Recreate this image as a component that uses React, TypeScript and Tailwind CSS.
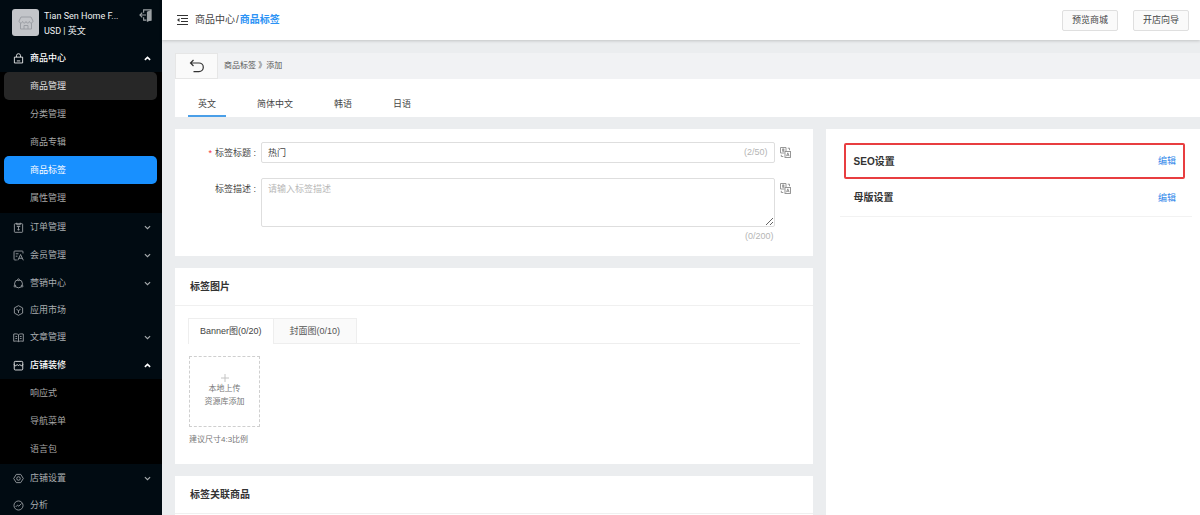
import type { ReactNode } from 'react';

type IconName =
  | 'bag' | 'order' | 'member' | 'marketing' | 'app' | 'article' | 'shop' | 'settings' | 'analysis';

const iconShapes: Record<IconName, ReactNode> = {
  bag: (
    <>
      <path d="M2 6h12v8.500H2z" strokeLinejoin="round" />
      <path d="M5 6V4a3 3 0 0 1 6 0v2" />
      <path d="M5.500 11.500h5" />
    </>
  ),
  order: (
    <>
      <rect x="2" y="2.500" width="12" height="12.500" rx="1" />
      <path d="M5.500 1v3h5V1M5.500 6.500h5M8 6.500V12M6.500 10.500L8 12l1.500-1.500" />
    </>
  ),
  member: (
    <>
      <path d="M14.500 5V2.500a1 1 0 0 0-1-1h-11a1 1 0 0 0-1 1v11a1 1 0 0 0 1 1h3" />
      <path d="M4 5.500h4M4 9h2.500M7 15l4-8.500 4 8.500M8.500 12h5" />
    </>
  ),
  marketing: (
    <>
      <circle cx="8" cy="8.500" r="5.800" />
      <circle cx="8" cy="2.500" r="1.300" fill="#010b12" />
      <circle cx="2.800" cy="11.800" r="1.300" fill="#010b12" />
      <circle cx="13.200" cy="11.800" r="1.300" fill="#010b12" />
    </>
  ),
  app: (
    <>
      <path d="M8 1l6 3.200v7.600L8 15l-6-3.200V4.200z" strokeLinejoin="round" />
      <path d="M5 6.200l3 2 3-2M8 8.200v3.500" />
    </>
  ),
  article: (
    <>
      <path d="M8 4v10M8 4C6 2.500 4 2.500 1 3v10.500c3-.5 5-.5 7 .5 2-1 4-1 7-.5V3c-3-.5-5-.5-7 1z" />
      <path d="M3.500 6.500h2.500M3.500 9.500h2.500M10 6.500h2.500M10 9.500h2.500" />
    </>
  ),
  shop: (
    <>
      <rect x="1.800" y="2" width="12.400" height="12.500" rx="1.500" />
      <path d="M1.500 6.500c1 2.500 3.500 2.500 4.500 0 1 2 3 2 4 0 1 2.500 3.500 2.500 4.500 0" />
    </>
  ),
  settings: (
    <>
      <path d="M4.800 2h6.400L15 8l-3.800 6H4.800L1 8z" strokeLinejoin="round" />
      <circle cx="8" cy="8" r="2.600" />
    </>
  ),
  analysis: (
    <>
      <circle cx="8" cy="8" r="6.600" />
      <path d="M4 10l2.500-2.500 2 1.500L12.500 5" />
    </>
  ),
};

function MenuIcon({ name }: { name: IconName }) {
  return (
    <svg viewBox="0 0 16 16" className="size-[11px] shrink-0" fill="none" stroke="currentColor" strokeWidth="1.200" aria-hidden="true">
      {iconShapes[name]}
    </svg>
  );
}

function Chevron({ open }: { open: boolean }) {
  return (
    <svg viewBox="0 0 8 8" className="ml-auto size-[7px]" fill="none" stroke="currentColor" strokeWidth={open ? 1.8 : 1.3} aria-hidden="true">
      <path d={open ? 'M1 5.500L4 2.700l3 2.800' : 'M1 2.500l3 2.800 3-2.800'} />
    </svg>
  );
}

interface MenuEntry {
  label: string;
  icon: IconName;
  leaf?: boolean;
  children?: { label: string; state?: 'hover' | 'active' }[];
}

const menu: MenuEntry[] = [
  {
    label: '商品中心',
    icon: 'bag',
    children: [
      { label: '商品管理', state: 'hover' },
      { label: '分类管理' },
      { label: '商品专辑' },
      { label: '商品标签', state: 'active' },
      { label: '属性管理' },
    ],
  },
  { label: '订单管理', icon: 'order' },
  { label: '会员管理', icon: 'member' },
  { label: '营销中心', icon: 'marketing' },
  { label: '应用市场', icon: 'app', leaf: true },
  { label: '文章管理', icon: 'article' },
  {
    label: '店铺装修',
    icon: 'shop',
    children: [{ label: '响应式' }, { label: '导航菜单' }, { label: '语言包' }],
  },
  { label: '店铺设置', icon: 'settings' },
  { label: '分析', icon: 'analysis', leaf: true },
];

const subItemStyle = {
  normal: 'text-[#a6a6a6]',
  hover: 'bg-[#272727] text-[#e0e0e0]',
  active: 'bg-[#1890ff] text-white',
};

function Sidebar() {
  return (
    <aside className="w-[162px] shrink-0 bg-[#010b12] text-[9px] text-[#a9adb0]">
      <div className="flex h-11 items-start pt-[9px] pr-2.5 pl-3">
        <div className="flex size-[27px] shrink-0 items-center justify-center rounded-[3px] bg-[#c3c5c9] text-[#9b9ea4]">
          <svg viewBox="0 0 16 16" className="size-4" fill="none" stroke="currentColor" strokeWidth="1" strokeLinejoin="round" aria-hidden="true">
            <path d="M3 2h10l2 4c0 2.300-3.200 2.600-3.600.5-.4 2-3 2-3.400 0-.4 2-3 2-3.400 0C4.200 8.600 1 8.300 1 6zM2.500 8v6h11V8M6 14v-3.500h4V14" />
          </svg>
        </div>
        <div className="ml-[5px] min-w-0 font-[Roboto,'Noto_Sans_CJK_SC',sans-serif] leading-[15px] text-[#f0f2f3]">
          <div className="whitespace-nowrap">Tian Sen Home F...</div>
          <div>USD | 英文</div>
        </div>
        <button type="button" aria-label="退出" className="ml-auto text-[#9da2a5]">
          <svg viewBox="0 0 14 14" className="size-[13px]" fill="none" stroke="currentColor" strokeWidth="1.200" aria-hidden="true">
            <path d="M5 4V1h8v11H9M5 9v3h3M7.500 6.500H1M3.500 4L1 6.500 3.500 9" />
            <path d="M8.500 3L13 1v11l-4.500 2z" fill="currentColor" stroke="none" />
          </svg>
        </button>
      </div>
      <nav>
        {menu.map((entry) => (
          <div key={entry.label}>
            <button
              type="button"
              className={`flex w-full items-center gap-[6px] pr-[11px] pl-[13px] ${entry.leaf ? 'h-[26px]' : 'h-7'} ${entry.children ? 'font-medium text-white' : ''}`}
            >
              <MenuIcon name={entry.icon} />
              <span className="pt-0.5">{entry.label}</span>
              {!entry.leaf && <Chevron open={Boolean(entry.children)} />}
            </button>
            {entry.children && (
              <ul className="bg-black pr-[5px] pb-px pl-1">
                {entry.children.map((child) => (
                  <li key={child.label}>
                    <a href="#" className={`flex h-7 items-center rounded-[5px] pt-0.5 pl-[26px] ${subItemStyle[child.state ?? 'normal']}`}>
                      {child.label}
                    </a>
                  </li>
                ))}
              </ul>
            )}
          </div>
        ))}
      </nav>
    </aside>
  );
}

function Header() {
  return (
    <header className="relative flex h-10 items-center bg-white pr-[11px] pl-[14px] shadow-[0_1px_3px_rgba(0,0,0,0.18)]">
      <button type="button" aria-label="收起菜单" className="text-[#333]">
        <svg viewBox="0 0 12 12" className="size-3" fill="none" stroke="currentColor" strokeWidth="1.100" aria-hidden="true">
          <path d="M1 1.500h11M5 4.500h7M5 7.500h7M1 10.500h11" />
          <path d="M3.500 4v4L1 6z" fill="currentColor" stroke="none" />
        </svg>
      </button>
      <nav aria-label="面包屑" className="ml-[7px] flex gap-px pb-0.5 text-[10px] text-[#444]">
        <span>商品中心</span>
        <span>/</span>
        <a href="#" className="font-bold text-[#2d93f5]">商品标签</a>
      </nav>
      <div className="ml-auto flex gap-[15px]">
        {['预览商城', '开店向导'].map((label) => (
          <button key={label} type="button" className="h-[21px] w-14 rounded-[2px] border border-[#dfdfdf] bg-[#fafafa] pt-0.5 text-[9px] text-[#444]">
            {label}
          </button>
        ))}
      </div>
    </header>
  );
}

function TranslateButton() {
  return (
    <button type="button" aria-label="翻译" className="ml-[5px] mr-[22px] mt-[5px] size-[11px] shrink-0 text-[#8c8c8c]">
      <svg viewBox="0 0 11 11" className="size-[11px]" fill="none" stroke="currentColor" strokeWidth="0.900" aria-hidden="true">
        <path d="M4.500 6H.5V.5h5.500V4M2 2.300h2.500M3.200 1.300V5M2 3.800h2.500" />
        <rect x="5" y="4.500" width="5.500" height="6" />
        <path d="M6.500 9.200l1.300-3.400 1.300 3.400M7 8.200h1.600M7.800 1.200h1.700v2M1.300 7.800v1.700h2" />
      </svg>
    </button>
  );
}

function TagForm() {
  return (
    <section className="bg-white pt-[13px] pb-3 text-[9px] text-[#444]">
      <div className="flex items-start">
        <label htmlFor="tag-title" className="w-[86px] shrink-0 pt-px pr-[5px] text-right leading-[21px]">
          <span className="mr-[3px] text-[#f5333f]">*</span>标签标题 :
        </label>
        <div className="flex h-[21px] min-w-0 flex-1 items-center rounded-[2px] border border-[#dedede] px-[6px]">
          <input id="tag-title" defaultValue="热门" className="min-w-0 flex-1 bg-transparent pt-0.5 outline-none" />
          <span className="text-[#b5b5b5]">(2/50)</span>
        </div>
        <TranslateButton />
      </div>
      <div className="mt-[14px] flex items-start">
        <label htmlFor="tag-desc" className="w-[86px] shrink-0 pt-px pr-[5px] text-right leading-[21px]">标签描述 :</label>
        <div className="min-w-0 flex-1">
          <textarea
            id="tag-desc"
            placeholder="请输入标签描述"
            className="block h-[49px] w-full rounded-[2px] border border-[#dedede] px-[6px] py-[3px] leading-[14px] outline-none placeholder:text-[#b8b8b8]"
          />
          <div className="pt-0.5 pr-px text-right leading-[15px] text-[#b5b5b5]">(0/200)</div>
        </div>
        <TranslateButton />
      </div>
    </section>
  );
}

function CardTitle({ children }: { children: ReactNode }) {
  return (
    <h2 className="flex h-[38px] items-center border-b border-[#f0f0f0] px-[15px] text-[10px] font-bold text-[#333]">
      {children}
    </h2>
  );
}

function ImageCard() {
  return (
    <section className="bg-white pb-[18px]">
      <CardTitle>标签图片</CardTitle>
      <div className="px-[13px] pt-3">
        <div role="tablist" className="flex h-[26px] border-b border-[#eee] text-[9px] text-[#444]">
          <button type="button" role="tab" aria-selected="true" className="-mb-px border border-b-0 border-[#eee] bg-white px-[11px]">
            Banner图(0/20)
          </button>
          <button type="button" role="tab" aria-selected="false" className="-mb-px border border-l-0 border-[#eee] bg-[#fafafa] px-4 pt-px text-[#555]">
            封面图(0/10)
          </button>
        </div>
        <div className="px-px pt-3 text-[8px] text-[#777]">
          <div className="flex size-[71px] flex-col items-center justify-center border border-dashed border-[#cfcfcf] pb-px">
            <svg viewBox="0 0 8 8" className="size-2" stroke="#c4c4c4" strokeWidth="1" aria-hidden="true">
              <path d="M4 0v8M0 4h8" />
            </svg>
            <button type="button" className="leading-[13px]">本地上传</button>
            <button type="button" className="leading-[13px]">资源库添加</button>
          </div>
          <p className="pt-1.5 leading-[13px]">建议尺寸4:3比例</p>
        </div>
      </div>
    </section>
  );
}

function SettingsPanel() {
  return (
    <aside className="bg-white pt-[14px] pr-2 pl-[14px] text-[10px]">
      <div className="mr-[7px] ml-1 flex h-9 items-center justify-between rounded-[2px] border-2 border-[#e83e40] pr-[7px] pl-2">
        <h2 className="font-bold text-[#333]">SEO设置</h2>
        <a href="#" className="pt-0.5 text-[9px] text-[#2d86ea]">编辑</a>
      </div>
      <div className="flex h-[38px] items-center justify-between border-b border-[#f2f2f2] pr-4 pl-[14px]">
        <h2 className="font-bold text-[#333]">母版设置</h2>
        <a href="#" className="pt-0.5 text-[9px] text-[#2d86ea]">编辑</a>
      </div>
    </aside>
  );
}

export default function App() {
  return (
    <div className="flex h-screen overflow-hidden bg-[#ebedef] font-['Liberation_Sans','Noto_Sans_CJK_SC',sans-serif]">
      <Sidebar />
      <div className="flex min-w-0 flex-1 flex-col">
        <Header />
        <main className="flex min-h-0 flex-1 flex-col pt-[13px] pl-[13px]">
          <div className="flex h-[26px] shrink-0 items-center bg-[#f1f2f4] text-[8px] text-[#555]">
            <button type="button" aria-label="返回" className="flex h-full w-[43px] items-center justify-center border border-[#e6e6e6] bg-[#fafafa] text-[#333]">
              <svg viewBox="0 0 16 14" className="h-[14px] w-4" fill="none" stroke="currentColor" strokeWidth="1.200" aria-hidden="true">
                <path d="M4.500 1L1.500 4l3 3M1.500 4H10a4.300 4.300 0 0 1 0 8.600H4.500" />
              </svg>
            </button>
            <span className="ml-[6px]">商品标签 》添加</span>
          </div>
          <div role="tablist" className="flex h-[38px] shrink-0 items-end gap-[21px] bg-white pl-[13px] text-[9px] text-[#444]">
            {['英文', '简体中文', '韩语', '日语'].map((label, index) => (
              <button
                key={label}
                type="button"
                role="tab"
                aria-selected={index === 0}
                className={`h-[25px] border-b-2 px-2.5 pt-0.5 ${index === 0 ? 'border-[#4a9fe8]' : 'border-transparent'}`}
              >
                {label}
              </button>
            ))}
          </div>
          <div className="mt-3 grid min-h-0 flex-1 grid-cols-[minmax(0,63fr)_minmax(0,37fr)] gap-[13px]">
            <div className="flex min-w-0 flex-col gap-3">
              <TagForm />
              <ImageCard />
              <section className="flex-1 bg-white">
                <CardTitle>标签关联商品</CardTitle>
              </section>
            </div>
            <SettingsPanel />
          </div>
        </main>
      </div>
    </div>
  );
}
